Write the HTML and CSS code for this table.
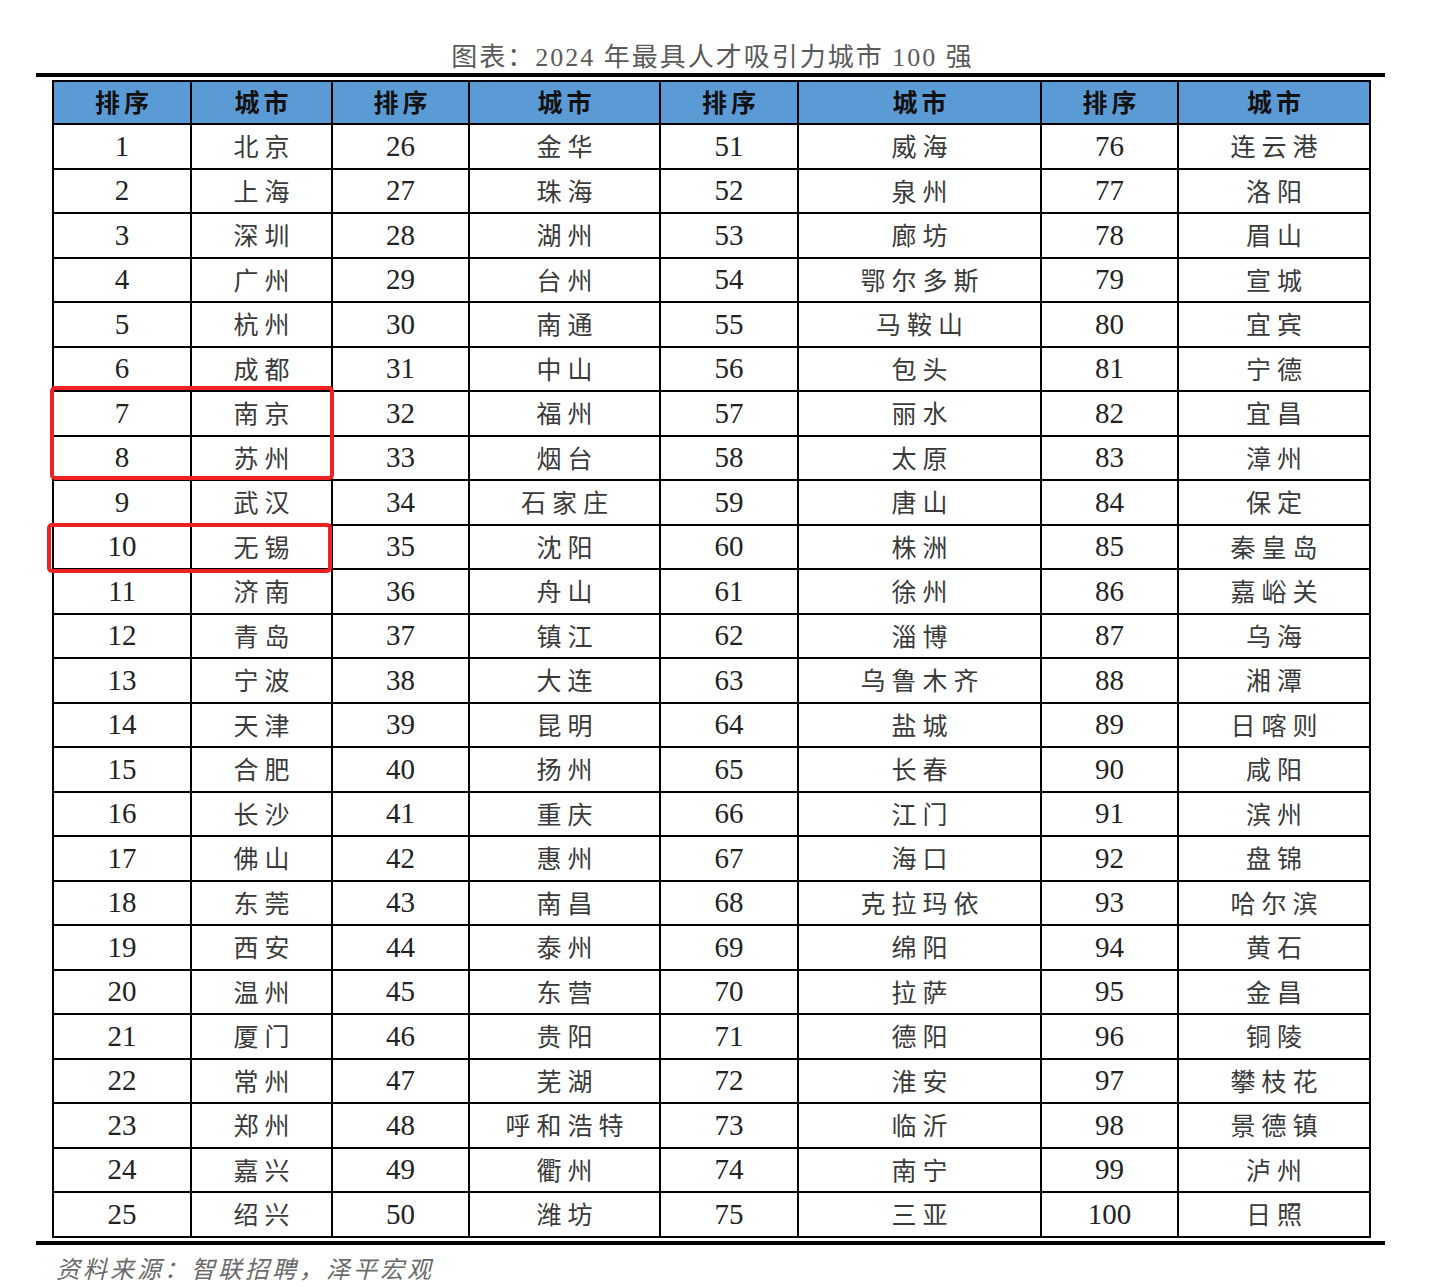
FILE: index.html
```html
<!DOCTYPE html>
<html lang="zh">
<head>
<meta charset="utf-8">
<link rel="stylesheet" href="styles.css">
</head>
<body>
<div class="page">
  <div class="title">图表：2024 年最具人才吸引力城市 100 强</div>
  <div class="rule"></div>
  <div class="table-wrap">
    <table class="rank">
      <colgroup>
        <col class="c1"><col class="c2"><col class="c3"><col class="c4"><col class="c5"><col class="c6"><col class="c7"><col class="c8">
      </colgroup>
      <thead>
        <tr><th>排序</th><th>城市</th><th>排序</th><th>城市</th><th>排序</th><th>城市</th><th>排序</th><th>城市</th></tr>
      </thead>
      <tbody>
        <tr><td class="n">1</td><td class="z">北京</td><td class="n">26</td><td class="z">金华</td><td class="n">51</td><td class="z">威海</td><td class="n">76</td><td class="z">连云港</td></tr>
        <tr><td class="n">2</td><td class="z">上海</td><td class="n">27</td><td class="z">珠海</td><td class="n">52</td><td class="z">泉州</td><td class="n">77</td><td class="z">洛阳</td></tr>
        <tr><td class="n">3</td><td class="z">深圳</td><td class="n">28</td><td class="z">湖州</td><td class="n">53</td><td class="z">廊坊</td><td class="n">78</td><td class="z">眉山</td></tr>
        <tr><td class="n">4</td><td class="z">广州</td><td class="n">29</td><td class="z">台州</td><td class="n">54</td><td class="z">鄂尔多斯</td><td class="n">79</td><td class="z">宣城</td></tr>
        <tr><td class="n">5</td><td class="z">杭州</td><td class="n">30</td><td class="z">南通</td><td class="n">55</td><td class="z">马鞍山</td><td class="n">80</td><td class="z">宜宾</td></tr>
        <tr><td class="n">6</td><td class="z">成都</td><td class="n">31</td><td class="z">中山</td><td class="n">56</td><td class="z">包头</td><td class="n">81</td><td class="z">宁德</td></tr>
        <tr><td class="n">7</td><td class="z">南京</td><td class="n">32</td><td class="z">福州</td><td class="n">57</td><td class="z">丽水</td><td class="n">82</td><td class="z">宜昌</td></tr>
        <tr><td class="n">8</td><td class="z">苏州</td><td class="n">33</td><td class="z">烟台</td><td class="n">58</td><td class="z">太原</td><td class="n">83</td><td class="z">漳州</td></tr>
        <tr><td class="n">9</td><td class="z">武汉</td><td class="n">34</td><td class="z">石家庄</td><td class="n">59</td><td class="z">唐山</td><td class="n">84</td><td class="z">保定</td></tr>
        <tr><td class="n">10</td><td class="z">无锡</td><td class="n">35</td><td class="z">沈阳</td><td class="n">60</td><td class="z">株洲</td><td class="n">85</td><td class="z">秦皇岛</td></tr>
        <tr><td class="n">11</td><td class="z">济南</td><td class="n">36</td><td class="z">舟山</td><td class="n">61</td><td class="z">徐州</td><td class="n">86</td><td class="z">嘉峪关</td></tr>
        <tr><td class="n">12</td><td class="z">青岛</td><td class="n">37</td><td class="z">镇江</td><td class="n">62</td><td class="z">淄博</td><td class="n">87</td><td class="z">乌海</td></tr>
        <tr><td class="n">13</td><td class="z">宁波</td><td class="n">38</td><td class="z">大连</td><td class="n">63</td><td class="z">乌鲁木齐</td><td class="n">88</td><td class="z">湘潭</td></tr>
        <tr><td class="n">14</td><td class="z">天津</td><td class="n">39</td><td class="z">昆明</td><td class="n">64</td><td class="z">盐城</td><td class="n">89</td><td class="z">日喀则</td></tr>
        <tr><td class="n">15</td><td class="z">合肥</td><td class="n">40</td><td class="z">扬州</td><td class="n">65</td><td class="z">长春</td><td class="n">90</td><td class="z">咸阳</td></tr>
        <tr><td class="n">16</td><td class="z">长沙</td><td class="n">41</td><td class="z">重庆</td><td class="n">66</td><td class="z">江门</td><td class="n">91</td><td class="z">滨州</td></tr>
        <tr><td class="n">17</td><td class="z">佛山</td><td class="n">42</td><td class="z">惠州</td><td class="n">67</td><td class="z">海口</td><td class="n">92</td><td class="z">盘锦</td></tr>
        <tr><td class="n">18</td><td class="z">东莞</td><td class="n">43</td><td class="z">南昌</td><td class="n">68</td><td class="z">克拉玛依</td><td class="n">93</td><td class="z">哈尔滨</td></tr>
        <tr><td class="n">19</td><td class="z">西安</td><td class="n">44</td><td class="z">泰州</td><td class="n">69</td><td class="z">绵阳</td><td class="n">94</td><td class="z">黄石</td></tr>
        <tr><td class="n">20</td><td class="z">温州</td><td class="n">45</td><td class="z">东营</td><td class="n">70</td><td class="z">拉萨</td><td class="n">95</td><td class="z">金昌</td></tr>
        <tr><td class="n">21</td><td class="z">厦门</td><td class="n">46</td><td class="z">贵阳</td><td class="n">71</td><td class="z">德阳</td><td class="n">96</td><td class="z">铜陵</td></tr>
        <tr><td class="n">22</td><td class="z">常州</td><td class="n">47</td><td class="z">芜湖</td><td class="n">72</td><td class="z">淮安</td><td class="n">97</td><td class="z">攀枝花</td></tr>
        <tr><td class="n">23</td><td class="z">郑州</td><td class="n">48</td><td class="z">呼和浩特</td><td class="n">73</td><td class="z">临沂</td><td class="n">98</td><td class="z">景德镇</td></tr>
        <tr><td class="n">24</td><td class="z">嘉兴</td><td class="n">49</td><td class="z">衢州</td><td class="n">74</td><td class="z">南宁</td><td class="n">99</td><td class="z">泸州</td></tr>
        <tr><td class="n">25</td><td class="z">绍兴</td><td class="n">50</td><td class="z">潍坊</td><td class="n">75</td><td class="z">三亚</td><td class="n">100</td><td class="z">日照</td></tr>
      </tbody>
    </table>
    <div class="mark mark-a"></div>
    <div class="mark mark-b"></div>
  </div>
  <div class="rule rule-bottom"></div>
  <div class="source">资料来源：智联招聘，泽平宏观</div>
</div>
</body>
</html>
```

FILE: styles.css
```css
html, body {
  margin: 0;
  padding: 0;
  background: #ffffff;
}

.page {
  width: 1349px;
  margin-left: 36px;
  padding-top: 40px;
  font-family: "Liberation Serif", "Noto Sans CJK SC", serif;
}

.title {
  text-align: center;
  font-family: "Liberation Serif", "Noto Sans CJK SC", serif;
  font-size: 26px;
  letter-spacing: 2px;
  line-height: 30px;
  padding-top: 3px;
  color: #5a5a5a;
  padding-left: 4px;
}

.rule {
  height: 4px;
  background: #000000;
}

.table-wrap {
  position: relative;
  margin: 3px 0 0 16px;
  width: 1318px;
}

.rank {
  border-collapse: collapse;
  table-layout: fixed;
  width: 1318px;
  border: 2px solid #000000;
}

.c1 { width: 138px; }
.c2 { width: 141px; }
.c3 { width: 137px; }
.c4 { width: 191px; }
.c5 { width: 138px; }
.c6 { width: 243px; }
.c7 { width: 137px; }
.c8 { width: 192px; }

.rank th,
.rank td {
  border: 2px solid #000000;
  padding: 0;
  text-align: center;
  vertical-align: middle;
}

.rank th {
  height: 38px;
  padding-bottom: 3px;
  background: #5b9bd5;
  font-family: "Noto Sans CJK SC", sans-serif;
  font-weight: 700;
  font-size: 25px;
  letter-spacing: 4px;
  text-indent: 4px;
  color: #111111;
}

.rank td.n {
  height: 42.5px;
  font-family: "Liberation Serif", serif;
  font-size: 29px;
  color: #222222;
}

.rank td.z {
  height: 40.5px;
  padding-bottom: 2px;
  font-family: "Noto Sans CJK SC", sans-serif;
  font-size: 25px;
  font-weight: 400;
  letter-spacing: 6px;
  text-indent: 6px;
  color: #3a3a3a;
}

.mark {
  position: absolute;
  border: 4px solid #ee2222;
  border-radius: 5px;
  box-sizing: border-box;
}

.mark-a {
  left: -2px;
  top: 306px;
  width: 284px;
  height: 94px;
}

.mark-b {
  left: -5px;
  top: 443px;
  width: 285px;
  height: 50px;
}

.rule-bottom {
  margin-top: 3px;
  height: 4px;
}

.source {
  margin-left: 20px;
  margin-top: 6px;
  font-family: "Noto Sans CJK SC", sans-serif;
  font-size: 24px;
  letter-spacing: 3px;
  font-style: italic;
  color: #6a6a6a;
  line-height: 34px;
}
```
